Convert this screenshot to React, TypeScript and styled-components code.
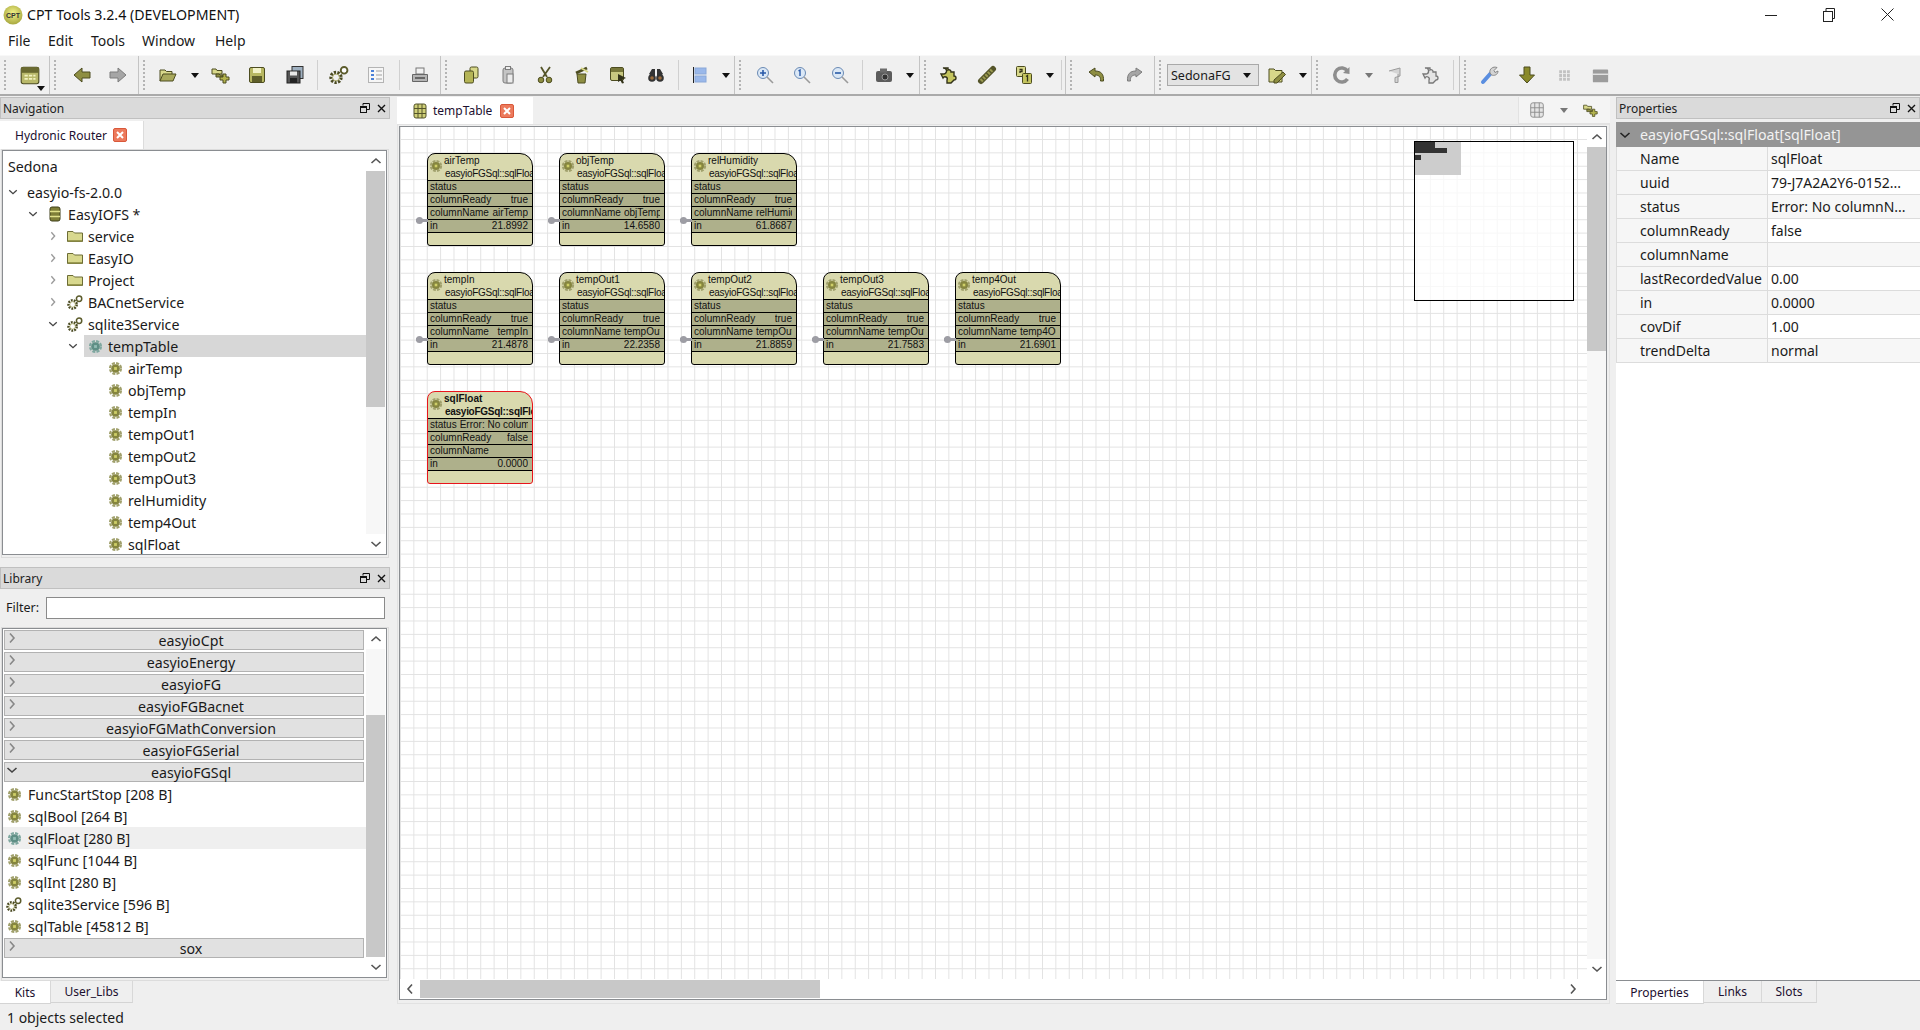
import React from 'react';
import styled, { createGlobalStyle } from 'styled-components';

const UI_FONT = '"Noto Sans", "Open Sans", sans-serif';

const Global = createGlobalStyle`
  html, body { margin: 0; padding: 0; height: 100%; background: #efefef; }
  #root { height: 100%; }
  * { box-sizing: border-box; }
  body { font-family: ${UI_FONT}; font-size: 14px; color: #1a1a1a; overflow: hidden; }
`;

const Window = styled.div`
  width: 1920px;
  height: 1030px;
  display: flex;
  flex-direction: column;
`;

const TitleBar = styled.div`
  height: 28px;
  background: #fff;
  display: flex;
  align-items: center;
  padding: 1px 0 0 3px;
`;

const TitleText = styled.span`
  margin-left: 4px;
  font-size: 14.2px;
  color: #111;
`;

const WinButtons = styled.div`
  margin-left: auto;
  display: flex;
  margin-right: 3px;
`;

const WinButton = styled.div`
  width: 58.5px;
  height: 24px;
  display: flex;
  align-items: center;
  justify-content: center;
`;

const MenuBar = styled.div`
  height: 27px;
  background: #fff;
  display: flex;
  align-items: center;
  padding: 0 0 2px 8px;
`;

const MenuItem = styled.span<{ $w: number }>`
  width: ${p => p.$w}px;
  font-size: 14px;
`;

const Toolbar = styled.div`
  height: 41px;
  flex: none;
  display: flex;
  background: #f0f0f0;
  border-top: 1px solid #f8f8f8;
  border-bottom: 2px solid #aaa;
`;

const ToolGroup = styled.div<{ $w?: number }>`
  ${p => (p.$w ? `width: ${p.$w}px; flex: none;` : 'flex: 1;')}
  display: flex;
  align-items: center;
  padding-left: 4px;
  border-right: 1px solid #c4c4c4;
  &:last-child { border-right: none; }
`;

const Grip = styled.div`
  width: 2px;
  height: 30px;
  margin-right: 5px;
  flex: none;
  border-left: 2px dotted #b4b4b4;
`;

const Tool = styled.div<{ $w: number }>`
  position: relative;
  width: ${p => p.$w}px;
  height: 100%;
  flex: none;
  display: flex;
  align-items: center;
  justify-content: center;
`;

const Caret = styled.div<{ $w: number; $gray?: boolean }>`
  width: ${p => p.$w}px;
  height: 100%;
  flex: none;
  display: flex;
  align-items: center;
  justify-content: center;
  &::after {
    content: '';
    border-left: 4px solid transparent;
    border-right: 4px solid transparent;
    border-top: 5px solid ${p => (p.$gray ? '#777' : '#111')};
  }
`;

const CornerCaret = styled.span`
  position: absolute;
  right: 4px;
  bottom: 3px;
  border-left: 4px solid transparent;
  border-right: 4px solid transparent;
  border-top: 5px solid #111;
`;

const ToolSep = styled.div<{ $w: number }>`
  width: ${p => p.$w}px;
  height: 30px;
  flex: none;
  display: flex;
  justify-content: center;
  &::after { content: ''; width: 1px; background: #d0d0d0; }
`;

const Combo = styled.div`
  width: 92px;
  height: 22px;
  margin-left: 1px;
  flex: none;
  display: flex;
  align-items: center;
  justify-content: space-between;
  padding: 0 7px 0 3px;
  border: 1px solid #a9a9a9;
  background: #e3e3e3;
  font-size: 12.5px;
  &::after {
    content: '';
    border-left: 4px solid transparent;
    border-right: 4px solid transparent;
    border-top: 5px solid #111;
  }
`;

const Workspace = styled.div`
  flex: 1;
  display: flex;
  min-height: 0;
`;

const LeftColumn = styled.div`
  width: 390px;
  flex: none;
  display: flex;
  flex-direction: column;
`;

const DockHeader = styled.div<{ $top: number }>`
  height: 22px;
  flex: none;
  margin-top: ${p => p.$top}px;
  background: #dadada;
  border: 1px solid #c0c0c0;
  display: flex;
  align-items: center;
  padding: 0 2px;
  font-size: 12px;
  color: #222;
`;

const DockButtons = styled.div`
  margin-left: auto;
  display: flex;
  align-items: center;
  gap: 7px;
  margin-right: 1px;
`;

const NavTabs = styled.div`
  height: 30px;
  flex: none;
  display: flex;
  align-items: flex-end;
`;

const NavTab = styled.div`
  width: 144px;
  height: 28px;
  background: #fff;
  border-right: 1px solid #dcdcdc;
  display: flex;
  align-items: center;
  padding-left: 15px;
  font-size: 12px;
  color: #1c1030;
  gap: 6px;
`;

const TabClose = styled.span`
  width: 14px;
  height: 14px;
  flex: none;
  border-radius: 2px;
  background: #ec7a5c;
  border: 1px solid #d9583a;
  display: flex;
  align-items: center;
  justify-content: center;
`;

const ListFrame = styled.div<{ $h: number }>`
  height: ${p => p.$h}px;
  flex: none;
  margin-left: 1px;
  width: 388px;
  border: 1px solid #dcdcdc;
  padding: 0 1px 2px 0;
`;

const ListBox = styled.div`
  height: 100%;
  border: 1px solid #8a8d91;
  background: #fff;
  display: flex;
`;

const ListBody = styled.div`
  flex: 1;
  min-width: 0;
  overflow: hidden;
`;

const VScroll = styled.div`
  width: 19px;
  flex: none;
  margin-right: 1px;
  display: flex;
  flex-direction: column;
  background: #fff;
`;

const ScrollArrow = styled.div`
  height: 20px;
  flex: none;
  display: flex;
  align-items: center;
  justify-content: center;
`;

const ScrollThumb = styled.div<{ $h: number }>`
  height: ${p => p.$h}px;
  flex: none;
  background: #c8c8c8;
`;

const ScrollGap = styled.div<{ $h?: number }>`
  ${p => (p.$h !== undefined ? `height: ${p.$h}px; flex: none;` : 'flex: 1;')}
  background: #f7f7f7;
`;

const RootRow = styled.div`
  height: 30px;
  display: flex;
  align-items: center;
  padding: 0 0 0 5px;
  font-size: 14.2px;
`;

const TreeRow = styled.div<{ $level: number }>`
  height: 22px;
  display: flex;
  align-items: center;
  padding-left: ${p => 5 + 20 * p.$level}px;
  font-size: 14.2px;
`;

const TreeChevron = styled.div`
  width: 10px;
  flex: none;
  display: flex;
  justify-content: center;
`;

const TreeLabel = styled.div<{ $selected?: boolean }>`
  flex: 1;
  height: 100%;
  margin-left: 6px;
  padding-left: 3px;
  display: flex;
  align-items: center;
  background: ${p => (p.$selected ? '#d7d7d7' : 'transparent')};
`;

const RowIcon = styled.span`
  width: 16px;
  height: 16px;
  flex: none;
  margin-right: 5px;
  display: flex;
  align-items: center;
  justify-content: center;
`;

const FilterRow = styled.div`
  height: 38px;
  flex: none;
  display: flex;
  align-items: center;
  padding: 0 5px 1px 6px;
  font-size: 12.5px;
`;

const FilterInput = styled.div`
  flex: 1;
  height: 22px;
  margin-left: 7px;
  background: #fff;
  border: 1px solid #8a8a8a;
`;

const LibGroup = styled.div`
  height: 20px;
  margin: 1px 2px 1px 1px;
  position: relative;
  background: #e1e1e1;
  border: 1px solid #b2b2b2;
  display: flex;
  align-items: center;
  justify-content: center;
  padding-left: 14px;
  font-size: 14.2px;
  & + & { margin-top: 2px; }
`;

const LibChevron = styled.span`
  position: absolute;
  left: 1px;
  top: 1px;
  display: flex;
`;

const LibItem = styled.div<{ $hover?: boolean }>`
  height: 22px;
  display: flex;
  align-items: center;
  padding-left: 3px;
  font-size: 14.2px;
  background: ${p => (p.$hover ? '#efefef' : 'transparent')};
  ${RowIcon} { margin-right: 6px; }
`;

const BottomTabs = styled.div`
  height: 23px;
  flex: none;
  display: flex;
  align-items: flex-start;
`;

const BottomTab = styled.div<{ $active?: boolean; $w: number }>`
  width: ${p => p.$w}px;
  height: ${p => (p.$active ? 23 : 22)}px;
  display: flex;
  align-items: center;
  justify-content: center;
  font-size: 12px;
  color: #1c1030;
  background: ${p => (p.$active ? '#fff' : 'transparent')};
  border-bottom: 1px solid #d4d4d4;
  border-right: 1px solid #d8d8d8;
`;

const CenterColumn = styled.div`
  width: 1213px;
  flex: none;
  margin-left: 7px;
  display: flex;
  flex-direction: column;
`;

const TabBar = styled.div`
  height: 28px;
  flex: none;
  display: flex;
  justify-content: space-between;
  padding-top: 1px;
`;

const EditorTab = styled.div`
  width: 136px;
  background: #fff;
  display: flex;
  align-items: center;
  padding-left: 15px;
  font-size: 12px;
  color: #1c1030;
  ${RowIcon} { margin-right: 5px; }
  ${TabClose} { margin-left: 8px; }
`;

const TabTools = styled.div`
  width: 92px;
  background: #f4f4f4;
  border-left: 1px solid #e2e2e2;
  border-bottom: 1px solid #e2e2e2;
  display: flex;
  align-items: center;
  padding-left: 9px;
`;

const CanvasFrame = styled.div`
  flex: 1;
  min-height: 0;
  border: 1px solid #e2e2e2;
  padding: 1px 2px 3px 1px;
`;

const CanvasBox = styled.div`
  height: 100%;
  border: 1px solid #8a8d91;
  background: #fff;
  display: grid;
  grid-template-columns: 1fr 19px;
  grid-template-rows: 1fr 20px;
`;

const CanvasView = styled.div`
  position: relative;
  overflow: hidden;
  background-color: #fff;
  background-image:
    linear-gradient(to right, #e2e2e2 1px, transparent 1px),
    linear-gradient(to bottom, #e2e2e2 1px, transparent 1px);
  background-size: 13.38px 13.38px;
  background-position: 0 12px;
`;

const HScroll = styled.div`
  display: flex;
  align-items: stretch;
  background: #fff;
`;

const HArrow = styled.div<{ $end?: boolean }>`
  width: 20px;
  flex: none;
  display: flex;
  align-items: center;
  justify-content: center;
  margin-right: ${p => (p.$end ? 4 : 0)}px;
`;

const HThumb = styled.div`
  width: 400px;
  flex: none;
  background: #c8c8c8;
  margin: 1px 0;
`;

const HGap = styled.div`
  flex: 1;
`;

const Card = styled.div<{ $col: number; $row: number; $error?: boolean }>`
  position: absolute;
  left: ${p => 27 + 132 * p.$col}px;
  top: ${p => 26 + 119 * p.$row}px;
  width: 106px;
  height: 93px;
  background: #d9d9ae;
  border: 1px solid ${p => (p.$error ? '#e8141c' : '#000')};
  border-radius: 8px 13px 3px 3px;
  font-family: "Liberation Sans", Arial, sans-serif;
  font-size: 10px;
  color: #111;
`;

const CardHead = styled.div<{ $error?: boolean }>`
  height: 26px;
  position: relative;
  overflow: hidden;
  padding-left: 16px;
  font-weight: ${p => (p.$error ? 700 : 400)};
  white-space: nowrap;
  svg { position: absolute; left: 1px; top: 5px; }
`;

const CardName = styled.div`
  height: 13px;
  line-height: 13px;
`;

const CardType = styled.div`
  height: 13px;
  line-height: 14px;
  padding-left: 1px;
  letter-spacing: -0.28px;
`;

const CardRow = styled.div`
  height: 13px;
  background: #aeb08b;
  border-top: 1px solid #000;
  display: flex;
  justify-content: space-between;
  padding: 0 4px 0 2px;
  line-height: 12px;
  white-space: nowrap;
`;

const CardValue = styled.span`
  min-width: 0;
  overflow: hidden;
  margin-left: 3px;
`;

const CardFoot = styled.div`
  height: 12px;
  border-top: 1px solid #000;
`;

const Port = styled.div`
  position: absolute;
  left: -12px;
  top: 65px;
  width: 12px;
  height: 3px;
  background: #9d9da4;
  &::before {
    content: '';
    position: absolute;
    left: 0;
    top: -2px;
    width: 7px;
    height: 7px;
    border-radius: 50%;
    background: #9d9da4;
  }
`;

const MiniMap = styled.div`
  position: absolute;
  left: 1014px;
  top: 14px;
  width: 160px;
  height: 160px;
  border: 1.5px solid #000;
  background: rgba(255, 255, 255, 0.72);
`;

const MiniViewport = styled.div`
  width: 46px;
  height: 33px;
  background: #cdcdcd;
`;

const MiniBlock = styled.div<{ $x: number; $y: number; $w: number; $h: number }>`
  position: absolute;
  left: ${p => p.$x}px;
  top: ${p => p.$y}px;
  width: ${p => p.$w}px;
  height: ${p => p.$h}px;
  background: #333;
`;

const RightColumn = styled.div`
  width: 304px;
  flex: none;
  margin-left: 6px;
  display: flex;
  flex-direction: column;
`;

const PropsBox = styled.div`
  flex: 1;
  min-height: 0;
  margin-top: 3px;
  background: #fff;
  border-bottom: 1px solid #8a8d91;
`;

const PropsHead = styled.div`
  height: 25px;
  background: #959595;
  color: #f2f2f2;
  display: flex;
  align-items: center;
  font-size: 14.2px;
  svg { margin: 0 9px 0 3px; }
`;

const PropRow = styled.div`
  height: 24px;
  display: grid;
  grid-template-columns: 151px 1fr;
  align-items: stretch;
  font-size: 14px;
  border-bottom: 1px solid #dcdcdc;
  border-left: 1px solid #dcdcdc;
  &:nth-child(even) > :last-child { background: #f7f7f7; }
`;

const PropName = styled.div`
  background: #f6f6f6;
  padding-left: 23px;
  display: flex;
  align-items: center;
  border-right: 1px solid #dcdcdc;
  white-space: nowrap;
`;

const PropValue = styled.div`
  background: #fff;
  padding-left: 3px;
  display: flex;
  align-items: center;
  white-space: nowrap;
  overflow: hidden;
`;

const StatusBar = styled.div`
  height: 26px;
  flex: none;
  display: flex;
  align-items: center;
  padding-left: 7px;
  font-size: 14px;
`;

const OL = '#8e8e42';
const DK = '#4c4c20';
const PL = '#d8d88a';
const GR = '#a6a6a6';
const GD = '#7c7c7c';

const Svg: React.FC<{ s?: number; children: React.ReactNode }> = ({ s = 20, children }) => (
  <svg width={s} height={s} viewBox="0 0 20 20" fill="none">{children}</svg>
);

const Chevron: React.FC<{ dir: 'r' | 'd' | 'u' | 'l'; color?: string }> = ({ dir, color = '#555' }) => {
  const pts = { r: '4,1.5 8,6 4,10.5', l: '8,1.5 4,6 8,10.5', d: '1.5,4 6,8 10.5,4', u: '1.5,8 6,4 10.5,8' }[dir];
  return (
    <svg width="12" height="12" viewBox="0 0 12 12" fill="none">
      <polyline points={pts} stroke={color} strokeWidth="1.6" />
    </svg>
  );
};

const GearOne: React.FC<{ teal?: boolean; s?: number }> = ({ teal, s = 15 }) => (
  <svg width={s} height={s} viewBox="0 0 16 16" fill="none">
    <circle cx="8" cy="8" r="5.8" stroke={teal ? '#7fa8a0' : '#a0a06c'} strokeWidth="2.4" strokeDasharray="3.2 1.35" />
    <circle cx="8" cy="8" r="4.6" fill={teal ? '#5f8f86' : '#85853f'} />
    <rect x="6.5" y="6.5" width="3" height="3" fill={teal ? '#93bdb5' : '#cfcf68'} />
  </svg>
);

const Gears: React.FC<{ s?: number }> = ({ s = 17 }) => (
  <svg width={s} height={s} viewBox="0 0 18 18" fill="none">
    <circle cx="6.3" cy="11.2" r="4.6" stroke="#4a4a22" strokeWidth="2.8" strokeDasharray="2 1.2" />
    <circle cx="6.3" cy="11.2" r="3.1" stroke="#a3a35c" strokeWidth="0.8" />
    <circle cx="13.6" cy="4.8" r="3" fill="#fff" stroke="#5c5c2c" strokeWidth="1.7" />
  </svg>
);

const Folder: React.FC = () => (
  <svg width="16" height="14" viewBox="0 0 16 14" fill="none">
    <path d="M0.5 12.5V2.5H6L7.5 4H15.5V12.5Z" fill="#d8d88e" stroke="#6d6d36" />
    <rect x="1" y="11" width="14" height="1.5" fill="#9a9a50" />
  </svg>
);

const Db: React.FC = () => (
  <svg width="12" height="16" viewBox="0 0 12 16" fill="none">
    <rect x="1" y="1" width="10" height="14" rx="2" fill="#7e7e38" stroke="#3e3e18" />
    <path d="M1 5.5H11M1 10.5H11" stroke="#e0e08a" strokeWidth="1.3" />
  </svg>
);

const TableIcon: React.FC<{ s?: number }> = ({ s = 16 }) => (
  <svg width={s} height={s} viewBox="0 0 16 16" fill="none">
    <rect x="2" y="1" width="12" height="14" rx="2" fill="#cfcf78" stroke="#55552a" />
    <path d="M6 1V15M10 1V15M2 5.5H14M2 10.5H14" stroke="#55552a" />
  </svg>
);

const FolderPlus: React.FC<{ s?: number }> = ({ s = 20 }) => (
  <Svg s={s}>
    <path d="M2 9V4H6L7 5.5H12V9Z" fill={PL} stroke={DK} />
    <path d="M6 12V9H9L10 10H13V12Z" fill={OL} stroke={DK} />
    <path d="M13 9V12H10V15H13V18H16V15H19V12H16V9Z" fill="#b4b44e" stroke={DK} />
  </Svg>
);

const icons = {
  panel: (
    <Svg s={22}>
      <rect x="2" y="3" width="16" height="15" rx="2" fill="#b9b96a" stroke={DK} />
      <rect x="2" y="3" width="16" height="5" fill="#6a6a30" />
      <path d="M5 10.5H15M5 13.5H15" stroke="#f4f4c0" strokeWidth="1.5" strokeDasharray="3 1" />
    </Svg>
  ),
  back: <Svg><polygon points="2,10 10,3 10,7 18,7 18,13 10,13 10,17" fill={OL} stroke={DK} /></Svg>,
  forward: <Svg><polygon points="18,10 10,3 10,7 2,7 2,13 10,13 10,17" fill={GR} stroke={GD} /></Svg>,
  open: (
    <Svg>
      <path d="M2 16V5H7L8.5 6.5H14V9" fill={PL} stroke={DK} />
      <path d="M2 16L5 9H18L15 16Z" fill="#a9a95c" stroke={DK} />
    </Svg>
  ),
  save: (
    <Svg>
      <rect x="2.5" y="2.5" width="15" height="15" rx="1.5" fill="#b8b862" stroke={DK} />
      <rect x="6" y="3" width="8" height="5" fill="#f2f2c8" />
      <rect x="5" y="11" width="10" height="6" fill="#5e5e2a" />
    </Svg>
  ),
  saveAll: (
    <Svg>
      <rect x="7" y="1.5" width="11" height="12" fill="#9fb0c0" stroke="#333" />
      <rect x="2" y="6" width="13" height="12" fill="#555" stroke="#222" />
      <rect x="5" y="6.5" width="7" height="4" fill="#e8e8e8" />
      <rect x="5" y="13" width="7" height="5" fill="#222" />
    </Svg>
  ),
  gears: <Gears s={20} />,
  list: (
    <Svg>
      <rect x="2.5" y="2.5" width="15" height="15" fill="#f6f6f6" stroke="#b4b4b4" />
      <path d="M5 6H8M5 10H8M5 14H8" stroke="#4a80d8" strokeWidth="2" />
      <path d="M10 6H16M10 10H16M10 14H16" stroke="#a0a0a0" />
    </Svg>
  ),
  print: (
    <Svg>
      <rect x="6" y="3" width="8" height="6" fill="#f2f2f2" stroke="#777" />
      <path d="M2.5 9.5H17.5V16.5H2.5Z" fill="#b4b4b4" stroke="#666" />
      <rect x="5" y="12" width="10" height="2" fill="#666" />
    </Svg>
  ),
  copy: (
    <Svg>
      <rect x="9" y="2" width="8" height="11" rx="1.5" fill={PL} stroke={DK} />
      <rect x="3.5" y="6" width="9" height="12" rx="1.5" fill="#b4b456" stroke={DK} />
    </Svg>
  ),
  paste: (
    <Svg>
      <rect x="5" y="3" width="10" height="15" rx="2" fill="#c4c4c4" stroke={GD} />
      <rect x="7.5" y="1.5" width="5" height="3" fill="#eee" stroke={GD} />
      <rect x="9" y="9" width="6" height="9" fill="#ececec" stroke={GD} />
    </Svg>
  ),
  cut: (
    <Svg>
      <path d="M6 2L12 12M15 2L8 12" stroke="#55552a" strokeWidth="1.8" />
      <circle cx="6" cy="15" r="2.8" fill="#8e8e42" stroke={DK} />
      <circle cx="14" cy="15" r="2.8" fill="#8e8e42" stroke={DK} />
    </Svg>
  ),
  trash: (
    <Svg>
      <path d="M5 9H14L13 18H6Z" fill="#8e8e42" stroke={DK} />
      <path d="M4 8L15 3" stroke={DK} strokeWidth="3" />
      <path d="M9 3L16 7" stroke={PL} strokeWidth="2" />
    </Svg>
  ),
  cursorBox: (
    <Svg>
      <rect x="2.5" y="2.5" width="13" height="13" rx="1.5" fill="#c8c880" stroke={DK} />
      <rect x="3" y="3" width="12" height="4" fill="#77773a" />
      <polygon points="10,9 18,13 14.5,14.5 16,18 14,18.5 12.5,15.5 10,17" fill="#33331a" />
    </Svg>
  ),
  binoculars: (
    <Svg>
      <path d="M3 9L6 4H9V14M17 9L14 4H11V14" fill="#333" />
      <circle cx="6" cy="13" r="3.8" fill="#333" />
      <circle cx="14" cy="13" r="3.8" fill="#333" />
      <circle cx="6" cy="13" r="1.8" fill="#9a6a3a" />
      <circle cx="14" cy="13" r="1.8" fill="#9a6a3a" />
    </Svg>
  ),
  align: (
    <Svg>
      <path d="M3.5 2V18" stroke="#222" />
      <rect x="5" y="3" width="11" height="6" fill="#9ab8ea" stroke="#8aa8d8" />
      <rect x="5" y="11" width="11" height="6" fill="#9ab8ea" stroke="#8aa8d8" />
    </Svg>
  ),
  zoomIn: (
    <Svg>
      <circle cx="8" cy="8" r="5.5" fill="#dbe8f6" stroke="#6a8ab4" />
      <path d="M12 12L18 18" stroke="#9a9a9a" strokeWidth="1.6" />
      <path d="M5 8H11M8 5V11" stroke="#2a5aa8" strokeWidth="1.6" />
    </Svg>
  ),
  zoomOne: (
    <Svg>
      <circle cx="8" cy="8" r="5.5" fill="#dbe8f6" stroke="#6a8ab4" />
      <path d="M12 12L18 18" stroke="#9a9a9a" strokeWidth="1.6" />
      <path d="M6.5 6L8 5V11" stroke="#2a5aa8" strokeWidth="1.4" />
    </Svg>
  ),
  zoomOut: (
    <Svg>
      <circle cx="8" cy="8" r="5.5" fill="#dbe8f6" stroke="#6a8ab4" />
      <path d="M12 12L18 18" stroke="#9a9a9a" strokeWidth="1.6" />
      <path d="M5 8H11" stroke="#2a5aa8" strokeWidth="1.6" />
    </Svg>
  ),
  camera: (
    <Svg>
      <rect x="2" y="6" width="16" height="11" rx="2" fill="#5c5c5c" />
      <rect x="6" y="3.5" width="7" height="4" fill="#6c6c6c" />
      <circle cx="11" cy="12" r="3" fill="#333" stroke="#999" />
    </Svg>
  ),
  puzzle: (
    <Svg>
      <path d="M4 3H9V5A2 2 0 0 1 12 7H15V11A2 2 0 0 1 15 15L12 18H8V15A2 2 0 0 0 4 13L2 9H5A2 2 0 0 0 4 3Z" fill="#c4c45e" stroke="#33331a" strokeWidth="1.4" />
    </Svg>
  ),
  rope: (
    <Svg>
      <path d="M4 16L16 4" stroke="#55552a" strokeWidth="6" strokeLinecap="round" />
      <path d="M4 16L16 4" stroke="#9a9a50" strokeWidth="3.5" strokeDasharray="2 1.4" />
    </Svg>
  ),
  numbers: (
    <Svg>
      <rect x="2.5" y="1.5" width="9" height="10" rx="1" fill={PL} stroke={DK} />
      <rect x="8.5" y="8.5" width="9" height="10" rx="1" fill="#c4c45e" stroke={DK} />
      <path d="M5.5 4.5H8V6.5H6V8M12 11.5L13.5 10.5V16.5" stroke="#33331a" strokeWidth="1.3" />
    </Svg>
  ),
  undo: (
    <Svg>
      <path d="M2 7L8 3V6C14 6 17 9 16.5 16H13.5C14 12 12 10 8 10V12Z" fill={OL} stroke={DK} />
    </Svg>
  ),
  redo: (
    <Svg>
      <path d="M18 7L12 3V6C6 6 3 9 3.5 16H6.5C6 12 8 10 12 10V12Z" fill={GR} stroke={GD} />
    </Svg>
  ),
  folderPen: (
    <Svg>
      <path d="M2 17V4H7L8.5 5.5H15V17Z" fill={PL} stroke={DK} />
      <path d="M7 15L16 7L18.5 9.5L10 18H7Z" fill="#8e8e42" stroke={DK} />
    </Svg>
  ),
  refresh: (
    <Svg>
      <path d="M15.5 6A7 7 0 1 0 15.5 14" stroke="#8e8e8e" strokeWidth="3.6" />
      <polygon points="17.5,2 17.5,9 11,8" fill="#8e8e8e" />
    </Svg>
  ),
  flag: (
    <Svg>
      <path d="M4 6L15 3V11L10 12.5V17.5H13V9" fill="#d4d4d4" stroke="#9a9a9a" />
    </Svg>
  ),
  puzzleGray: (
    <Svg>
      <path d="M4 3H9V5A2 2 0 0 1 12 7H15V11A2 2 0 0 1 15 15L12 18H8V15A2 2 0 0 0 4 13L2 9H5A2 2 0 0 0 4 3Z" fill="#e4e4e4" stroke="#777" strokeWidth="1.3" />
    </Svg>
  ),
  wrench: (
    <Svg>
      <path d="M3 17L11 8" stroke="#5a8ee0" strokeWidth="4" strokeLinecap="round" />
      <path d="M10 8C9 4 13 1 17 2.5L14 5.5L15 7.5L18 6C18 10 14 11 11.5 10Z" fill="#d4d4d4" stroke="#888" />
    </Svg>
  ),
  down: <Svg><polygon points="10,18 2.5,10 7,10 7,2 13,2 13,10 17.5,10" fill="#8a8a2a" stroke={DK} /></Svg>,
  dots: (
    <Svg s={13}>
      <path d="M4 2V18M10 2V18M16 2V18" stroke="#c2c2c2" strokeWidth="4.4" strokeDasharray="4.4 1.4" />
    </Svg>
  ),
  box: (
    <Svg s={17}>
      <rect x="1" y="3" width="18" height="15" rx="1" fill="#9c9c9c" />
      <path d="M1 8.5H19" stroke="#f0f0f0" strokeWidth="1.4" />
    </Svg>
  ),
  gridGray: (
    <Svg>
      <rect x="3" y="2" width="14" height="16" rx="2.5" fill="#e4e4e4" stroke="#8a8a8a" />
      <path d="M7.5 2V18M12.5 2V18M3 7.5H17M3 12.5H17" stroke="#8a8a8a" />
    </Svg>
  ),
};

const CloseX: React.FC = () => (
  <svg width="8" height="8" viewBox="0 0 8 8"><path d="M1 1L7 7M7 1L1 7" stroke="#fff" strokeWidth="2" /></svg>
);

const DockControls: React.FC = () => (
  <DockButtons>
    <svg width="10" height="10" viewBox="0 0 10 10" fill="none">
      <path d="M3 2.5V0.5H9.5V6.5H7" stroke="#111" />
      <rect x="0.5" y="3.5" width="6" height="6" stroke="#111" />
      <path d="M0.5 4.5H6.5" stroke="#111" />
    </svg>
    <svg width="9" height="9" viewBox="0 0 9 9"><path d="M1 1L8 8M8 1L1 8" stroke="#111" strokeWidth="1.4" /></svg>
  </DockButtons>
);

type TreeNode = { level: number; label: string; chevron?: 'r' | 'd'; icon?: React.ReactNode; selected?: boolean };

const treeNodes: TreeNode[] = [
  { level: 0, label: 'easyio-fs-2.0.0', chevron: 'd' },
  { level: 1, label: 'EasyIOFS *', chevron: 'd', icon: <Db /> },
  { level: 2, label: 'service', chevron: 'r', icon: <Folder /> },
  { level: 2, label: 'EasyIO', chevron: 'r', icon: <Folder /> },
  { level: 2, label: 'Project', chevron: 'r', icon: <Folder /> },
  { level: 2, label: 'BACnetService', chevron: 'r', icon: <Gears /> },
  { level: 2, label: 'sqlite3Service', chevron: 'd', icon: <Gears /> },
  { level: 3, label: 'tempTable', chevron: 'd', icon: <GearOne teal />, selected: true },
  ...['airTemp', 'objTemp', 'tempIn', 'tempOut1', 'tempOut2', 'tempOut3', 'relHumidity', 'temp4Out', 'sqlFloat'].map(label => ({
    level: 4,
    label,
    icon: <GearOne />,
  })),
];

const libBefore = ['easyioCpt', 'easyioEnergy', 'easyioFG', 'easyioFGBacnet', 'easyioFGMathConversion', 'easyioFGSerial'];

const libItems = [
  { label: 'FuncStartStop [208 B]', icon: <GearOne /> },
  { label: 'sqlBool [264 B]', icon: <GearOne /> },
  { label: 'sqlFloat [280 B]', icon: <GearOne teal />, hover: true },
  { label: 'sqlFunc [1044 B]', icon: <GearOne /> },
  { label: 'sqlInt [280 B]', icon: <GearOne /> },
  { label: 'sqlite3Service [596 B]', icon: <Gears /> },
  { label: 'sqlTable [45812 B]', icon: <GearOne /> },
];

const cards = [
  { name: 'airTemp', col: 0, row: 0, ready: 'true', column: 'airTemp', value: '21.8992' },
  { name: 'objTemp', col: 1, row: 0, ready: 'true', column: 'objTemp', value: '14.6580' },
  { name: 'relHumidity', col: 2, row: 0, ready: 'true', column: 'relHumidity', value: '61.8687' },
  { name: 'tempIn', col: 0, row: 1, ready: 'true', column: 'tempIn', value: '21.4878' },
  { name: 'tempOut1', col: 1, row: 1, ready: 'true', column: 'tempOut1', value: '22.2358' },
  { name: 'tempOut2', col: 2, row: 1, ready: 'true', column: 'tempOut2', value: '21.8859' },
  { name: 'tempOut3', col: 3, row: 1, ready: 'true', column: 'tempOut3', value: '21.7583' },
  { name: 'temp4Out', col: 4, row: 1, ready: 'true', column: 'temp4Out', value: '21.6901' },
  { name: 'sqlFloat', col: 0, row: 2, ready: 'false', column: '', value: '0.0000', status: 'Error: No columnName', error: true },
];

const props = [
  ['Name', 'sqlFloat'],
  ['uuid', '79-J7A2A2Y6-0152...'],
  ['status', 'Error: No columnN...'],
  ['columnReady', 'false'],
  ['columnName', ''],
  ['lastRecordedValue', '0.00'],
  ['in', '0.0000'],
  ['covDif', '1.00'],
  ['trendDelta', 'normal'],
];

const App: React.FC = () => (
  <Window>
    <Global />
    <TitleBar>
      <svg width="20" height="20" viewBox="0 0 20 20">
        <defs>
          <radialGradient id="cptLogo" cx="50%" cy="40%" r="60%">
            <stop offset="0%" stopColor="#f4f488" />
            <stop offset="100%" stopColor="#a8a840" />
          </radialGradient>
        </defs>
        <circle cx="10" cy="10" r="9.5" fill="url(#cptLogo)" />
        <text x="10" y="12.5" textAnchor="middle" fontSize="7" fontWeight="700" fontFamily="Liberation Sans" fill="#333">CPT</text>
      </svg>
      <TitleText>CPT Tools 3.2.4 (DEVELOPMENT)</TitleText>
      <WinButtons>
        <WinButton>
          <svg width="12" height="12" viewBox="0 0 12 12"><path d="M0 6.5H12" stroke="#222" /></svg>
        </WinButton>
        <WinButton>
          <svg width="12" height="14" viewBox="0 0 12 14" fill="none">
            <rect x="0.5" y="3.5" width="9" height="10" stroke="#222" />
            <path d="M3 3V0.5H11.5V10.5H10" stroke="#222" />
          </svg>
        </WinButton>
        <WinButton>
          <svg width="13" height="13" viewBox="0 0 13 13"><path d="M0.5 0.5L12.5 12.5M12.5 0.5L0.5 12.5" stroke="#222" /></svg>
        </WinButton>
      </WinButtons>
    </TitleBar>
    <MenuBar>
      <MenuItem $w={40}>File</MenuItem>
      <MenuItem $w={43}>Edit</MenuItem>
      <MenuItem $w={51}>Tools</MenuItem>
      <MenuItem $w={73}>Window</MenuItem>
      <MenuItem $w={40}>Help</MenuItem>
    </MenuBar>
    <Toolbar>
      <ToolGroup $w={50}>
        <Grip />
        <Tool $w={38}>{icons.panel}<CornerCaret /></Tool>
      </ToolGroup>
      <ToolGroup $w={89}>
        <Grip />
        <Tool $w={41}>{icons.back}</Tool>
        <Tool $w={32}>{icons.forward}</Tool>
      </ToolGroup>
      <ToolGroup $w={302}>
        <Grip />
        <Tool $w={36}>{icons.open}</Tool>
        <Caret $w={18} />
        <Tool $w={32}><FolderPlus /></Tool>
        <Tool $w={42}>{icons.save}</Tool>
        <Tool $w={34}>{icons.saveAll}</Tool>
        <ToolSep $w={10} />
        <Tool $w={34}>{icons.gears}</Tool>
        <Tool $w={40}>{icons.list}</Tool>
        <ToolSep $w={6} />
        <Tool $w={36}>{icons.print}</Tool>
      </ToolGroup>
      <ToolGroup $w={294}>
        <Grip />
        <Tool $w={38}>{icons.copy}</Tool>
        <Tool $w={36}>{icons.paste}</Tool>
        <Tool $w={38}>{icons.cut}</Tool>
        <Tool $w={36}>{icons.trash}</Tool>
        <Tool $w={36}>{icons.cursorBox}</Tool>
        <Tool $w={40}>{icons.binoculars}</Tool>
        <ToolSep $w={4} />
        <Tool $w={40}>{icons.align}</Tool>
        <Caret $w={12} />
      </ToolGroup>
      <ToolGroup $w={185}>
        <Grip />
        <Tool $w={38}>{icons.zoomIn}</Tool>
        <Tool $w={36}>{icons.zoomOne}</Tool>
        <Tool $w={40}>{icons.zoomOut}</Tool>
        <ToolSep $w={4} />
        <Tool $w={40}>{icons.camera}</Tool>
        <Caret $w={12} />
      </ToolGroup>
      <ToolGroup $w={146}>
        <Grip />
        <Tool $w={36}>{icons.puzzle}</Tool>
        <Tool $w={40}>{icons.rope}</Tool>
        <Tool $w={34}>{icons.numbers}</Tool>
        <Caret $w={18} />
        <ToolSep $w={5} />
      </ToolGroup>
      <ToolGroup $w={89}>
        <Grip />
        <Tool $w={40}>{icons.undo}</Tool>
        <Tool $w={34}>{icons.redo}</Tool>
      </ToolGroup>
      <ToolGroup $w={157}>
        <Grip />
        <Combo>SedonaFG</Combo>
        <Tool $w={36}>{icons.folderPen}</Tool>
        <Caret $w={16} />
      </ToolGroup>
      <ToolGroup $w={148}>
        <Grip />
        <Tool $w={38}>{icons.refresh}</Tool>
        <Caret $w={16} $gray />
        <Tool $w={36}>{icons.flag}</Tool>
        <Tool $w={36}>{icons.puzzleGray}</Tool>
        <ToolSep $w={9} />
      </ToolGroup>
      <ToolGroup>
        <Grip />
        <Tool $w={37}>{icons.wrench}</Tool>
        <Tool $w={38}>{icons.down}</Tool>
        <Tool $w={36}>{icons.dots}</Tool>
        <Tool $w={36}>{icons.box}</Tool>
      </ToolGroup>
    </Toolbar>
    <Workspace>
      <LeftColumn>
        <DockHeader $top={1}>Navigation<DockControls /></DockHeader>
        <NavTabs>
          <NavTab>Hydronic Router<TabClose><CloseX /></TabClose></NavTab>
        </NavTabs>
        <ListFrame $h={409}>
          <ListBox>
            <ListBody>
              <RootRow>Sedona</RootRow>
              {treeNodes.map(node => (
                <TreeRow key={node.label} $level={node.level}>
                  <TreeChevron>
                    {node.chevron && <Chevron dir={node.chevron} color={node.chevron === 'd' ? '#444' : '#999'} />}
                  </TreeChevron>
                  <TreeLabel $selected={node.selected}>
                    {node.icon && <RowIcon>{node.icon}</RowIcon>}
                    {node.label}
                  </TreeLabel>
                </TreeRow>
              ))}
            </ListBody>
            <VScroll>
              <ScrollArrow><Chevron dir="u" /></ScrollArrow>
              <ScrollThumb $h={236} />
              <ScrollGap />
              <ScrollArrow><Chevron dir="d" /></ScrollArrow>
            </VScroll>
          </ListBox>
        </ListFrame>
        <DockHeader $top={9}>Library<DockControls /></DockHeader>
        <FilterRow>Filter:<FilterInput /></FilterRow>
        <ListFrame $h={354}>
          <ListBox>
            <ListBody>
              {libBefore.map(name => (
                <LibGroup key={name}><LibChevron><Chevron dir="r" color="#888" /></LibChevron>{name}</LibGroup>
              ))}
              <LibGroup><LibChevron><Chevron dir="d" color="#444" /></LibChevron>easyioFGSql</LibGroup>
              {libItems.map(item => (
                <LibItem key={item.label} $hover={item.hover}>
                  <RowIcon>{item.icon}</RowIcon>
                  {item.label}
                </LibItem>
              ))}
              <LibGroup><LibChevron><Chevron dir="r" color="#888" /></LibChevron>sox</LibGroup>
            </ListBody>
            <VScroll>
              <ScrollArrow><Chevron dir="u" /></ScrollArrow>
              <ScrollGap $h={66} />
              <ScrollThumb $h={242} />
              <ScrollArrow><Chevron dir="d" /></ScrollArrow>
            </VScroll>
          </ListBox>
        </ListFrame>
        <BottomTabs>
          <BottomTab $active $w={51}>Kits</BottomTab>
          <BottomTab $w={82}>User_Libs</BottomTab>
        </BottomTabs>
      </LeftColumn>
      <CenterColumn>
        <TabBar>
          <EditorTab>
            <RowIcon><TableIcon /></RowIcon>
            tempTable
            <TabClose><CloseX /></TabClose>
          </EditorTab>
          <TabTools>
            <Tool $w={18}>{icons.gridGray}</Tool>
            <Caret $w={36} $gray />
            <Tool $w={16}><FolderPlus s={18} /></Tool>
          </TabTools>
        </TabBar>
        <CanvasFrame>
          <CanvasBox>
            <CanvasView>
              {cards.map(card => (
                <Card key={card.name} $col={card.col} $row={card.row} $error={card.error}>
                  <CardHead $error={card.error}>
                    <GearOne s={14} />
                    <CardName>{card.name}</CardName>
                    <CardType>easyioFGSql::sqlFloat</CardType>
                  </CardHead>
                  <CardRow>status<CardValue>{card.status}</CardValue></CardRow>
                  <CardRow>columnReady<CardValue>{card.ready}</CardValue></CardRow>
                  <CardRow>columnName<CardValue>{card.column}</CardValue></CardRow>
                  <CardRow>in<CardValue>{card.value}</CardValue></CardRow>
                  <CardFoot />
                  {!card.error && <Port />}
                </Card>
              ))}
              <MiniMap>
                <MiniViewport />
                <MiniBlock $x={0} $y={0} $w={20} $h={11} />
                <MiniBlock $x={20} $y={6} $w={12} $h={5} />
                <MiniBlock $x={0} $y={13} $w={6} $h={5} />
              </MiniMap>
            </CanvasView>
            <VScroll>
              <ScrollArrow><Chevron dir="u" /></ScrollArrow>
              <ScrollThumb $h={204} />
              <ScrollGap />
              <ScrollArrow><Chevron dir="d" /></ScrollArrow>
            </VScroll>
            <HScroll>
              <HArrow><Chevron dir="l" /></HArrow>
              <HThumb />
              <HGap />
              <HArrow $end><Chevron dir="r" /></HArrow>
            </HScroll>
          </CanvasBox>
        </CanvasFrame>
      </CenterColumn>
      <RightColumn>
        <DockHeader $top={1}>Properties<DockControls /></DockHeader>
        <PropsBox>
          <PropsHead><Chevron dir="d" color="#222" />easyioFGSql::sqlFloat[sqlFloat]</PropsHead>
          {props.map(([name, value]) => (
            <PropRow key={name}>
              <PropName>{name}</PropName>
              <PropValue>{value}</PropValue>
            </PropRow>
          ))}
        </PropsBox>
        <BottomTabs>
          <BottomTab $active $w={88}>Properties</BottomTab>
          <BottomTab $w={58}>Links</BottomTab>
          <BottomTab $w={55}>Slots</BottomTab>
        </BottomTabs>
      </RightColumn>
    </Workspace>
    <StatusBar>1 objects selected</StatusBar>
  </Window>
);

export default App;
